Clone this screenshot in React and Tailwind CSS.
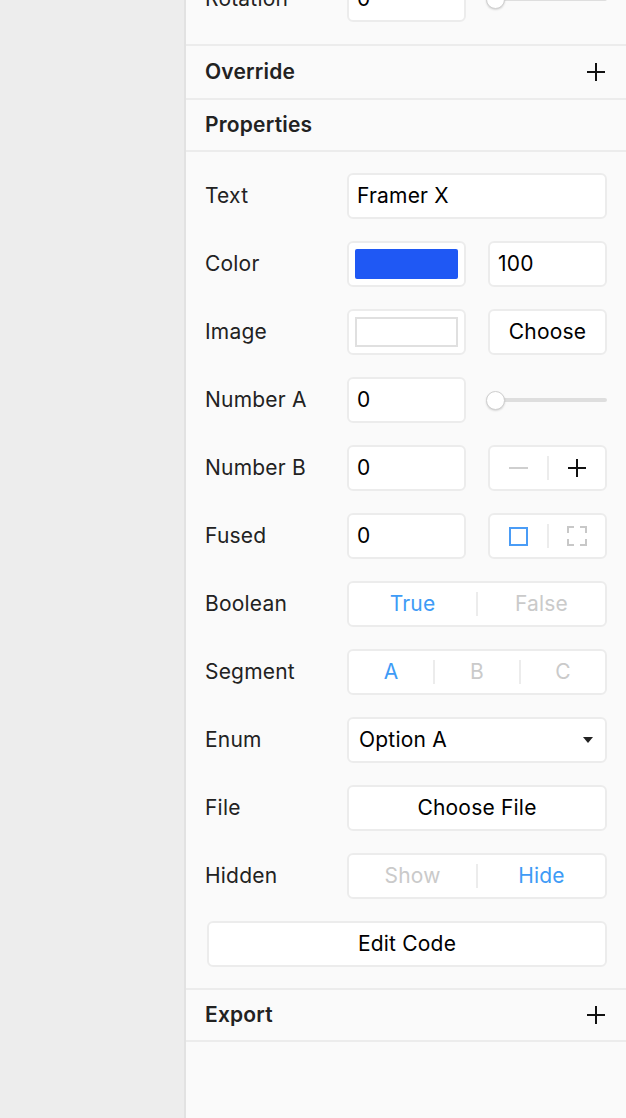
import React from 'react';

const box = "h-[46px] rounded-[6px] border-2 border-[#ececec] bg-white";

function Row({ label, children }) {
  return (
    <div className="flex items-center h-[46px]">
      <div className="w-[142px] shrink-0 text-[21px] tracking-[0.2px] text-[#222]">{label}</div>
      <div className="flex-1 flex gap-[22px]">{children}</div>
    </div>
  );
}

function Input({ value, wide }) {
  return (
    <div className={`${box} ${wide ? 'flex-1' : 'w-[119px]'} flex items-center px-[8px] text-[21px] tracking-[0.2px] text-black`}>
      {value}
    </div>
  );
}

function Slider() {
  return (
    <div className="flex-1 relative h-[46px] flex items-center">
      <div className="w-full h-[4px] rounded-full bg-[#dedede]" />
      <div className="absolute left-[-2px] w-[19px] h-[19px] rounded-full bg-white border border-[#cfcfcf] shadow-[0_1px_2px_rgba(0,0,0,0.15)]" />
    </div>
  );
}

function Segmented({ items, active }) {
  return (
    <div className={`${box} flex-1 flex items-center`}>
      {items.map((it, i) => (
        <React.Fragment key={i}>
          {i > 0 && <div className="w-[2px] h-[24px] bg-[#ececec]" />}
          <div className={`flex-1 text-center text-[21px] tracking-[0.2px] ${i === active ? 'text-[#3e9bf6]' : 'text-[#cacaca]'}`}>{it}</div>
        </React.Fragment>
      ))}
    </div>
  );
}

function Plus() {
  return (
    <svg width="20" height="20" viewBox="0 0 20 20">
      <path d="M10 1v18M1 10h18" stroke="#111" strokeWidth="2" />
    </svg>
  );
}

function Header({ title, plus, tall }) {
  return (
    <div className={`flex items-center justify-between ${tall ? 'h-[54px]' : 'h-[52px]'} pl-[19px] pr-[21px] border-b-2 border-[#ececec]`}>
      <span className="text-[21px] tracking-[0.2px] font-semibold text-[#222]">{title}</span>
      {plus && <Plus />}
    </div>
  );
}

export default function App() {
  return (
    <div className="flex w-[626px] h-[1118px] overflow-hidden bg-[#ededed]" style={{ fontFamily: 'Inter, "Noto Sans", sans-serif' }}>
      <div className="w-[184px] shrink-0" />
      <div className="w-[2px] shrink-0 bg-[#e2e2e2]" />
      <div className="flex-1 bg-[#fafafa] flex flex-col">
        <div className="pl-[19px] pr-[20px] pb-[22px] -mt-[24px] border-b-2 border-[#ececec]">
          <Row label="Rotation">
            <Input value="0" />
            <Slider />
          </Row>
        </div>
        <Header title="Override" plus tall />
        <Header title="Properties" />
        <div className="pl-[19px] pr-[20px] py-[21px] flex flex-col gap-[22px] border-b-2 border-[#ececec]">
          <Row label="Text"><Input value="Framer X" wide /></Row>
          <Row label="Color">
            <div className={`${box} w-[119px] p-[6px]`}>
              <div className="w-full h-full rounded-[2px] bg-[#1f58f4]" />
            </div>
            <Input value="100" />
          </Row>
          <Row label="Image">
            <div className={`${box} w-[119px] p-[6px]`}>
              <div className="w-full h-full border-2 border-[#e0e0e0] bg-white" />
            </div>
            <div className={`${box} w-[119px] flex items-center justify-center text-[21px] tracking-[0.2px] text-black`}>Choose</div>
          </Row>
          <Row label="Number A">
            <Input value="0" />
            <Slider />
          </Row>
          <Row label="Number B">
            <Input value="0" />
            <div className={`${box} flex-1 flex items-center`}>
              <div className="flex-1 flex justify-center">
                <div className="w-[19px] h-[2px] bg-[#cfcfcf]" />
              </div>
              <div className="w-[2px] h-[24px] bg-[#ececec]" />
              <div className="flex-1 flex justify-center"><Plus /></div>
            </div>
          </Row>
          <Row label="Fused">
            <Input value="0" />
            <div className={`${box} flex-1 flex items-center`}>
              <div className="flex-1 flex justify-center">
                <div className="w-[19px] h-[19px] border-2 border-[#4a9cf6]" />
              </div>
              <div className="w-[2px] h-[24px] bg-[#ececec]" />
              <div className="flex-1 flex justify-center">
                <svg width="20" height="20" viewBox="0 0 20 20">
                  <path d="M1 7V1h6M13 1h6v6M19 13v6h-6M7 19H1v-6" fill="none" stroke="#c8c8c8" strokeWidth="2" />
                </svg>
              </div>
            </div>
          </Row>
          <Row label="Boolean"><Segmented items={["True", "False"]} active={0} /></Row>
          <Row label="Segment"><Segmented items={["A", "B", "C"]} active={0} /></Row>
          <Row label="Enum">
            <div className={`${box} flex-1 flex items-center justify-between pl-[10px] pr-[12px] text-[21px] tracking-[0.2px] text-black`}>
              <span>Option A</span>
              <svg width="10" height="6" viewBox="0 0 10 6"><path d="M0 0h10L5 6z" fill="#222" /></svg>
            </div>
          </Row>
          <Row label="File">
            <div className={`${box} flex-1 flex items-center justify-center text-[21px] tracking-[0.2px] text-black`}>Choose File</div>
          </Row>
          <Row label="Hidden"><Segmented items={["Show", "Hide"]} active={1} /></Row>
          <div className={`${box} ml-[2px] flex items-center justify-center text-[21px] tracking-[0.2px] text-black`}>Edit Code</div>
        </div>
        <Header title="Export" plus />
      </div>
    </div>
  );
}
